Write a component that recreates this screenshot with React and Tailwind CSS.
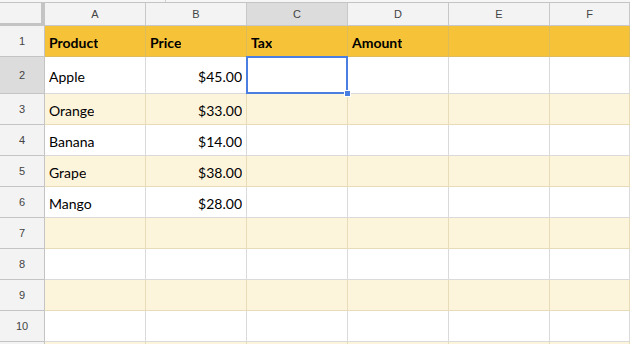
const cols = ["A", "B", "C", "D", "E", "F"];

const rows = [
  { n: 1, h: "h-[31px]", kind: "head", cells: ["Product", "Price", "Tax", "Amount", "", ""] },
  { n: 2, h: "h-[37px]", kind: "white", cells: ["Apple", "$45.00", "", "", "", ""], selected: true },
  { n: 3, h: "h-[31px]", kind: "band", cells: ["Orange", "$33.00", "", "", "", ""] },
  { n: 4, h: "h-[31px]", kind: "white", cells: ["Banana", "$14.00", "", "", "", ""] },
  { n: 5, h: "h-[31px]", kind: "band", cells: ["Grape", "$38.00", "", "", "", ""] },
  { n: 6, h: "h-[31px]", kind: "white", cells: ["Mango", "$28.00", "", "", "", ""] },
  { n: 7, h: "h-[31px]", kind: "band", cells: ["", "", "", "", "", ""] },
  { n: 8, h: "h-[31px]", kind: "white", cells: ["", "", "", "", "", ""] },
  { n: 9, h: "h-[31px]", kind: "band", cells: ["", "", "", "", "", ""] },
  { n: 10, h: "h-[31px]", kind: "white", cells: ["", "", "", "", "", ""] },
  { n: "", h: "h-[31px]", kind: "band", cells: ["", "", "", "", "", ""] },
];

const rowBg = {
  head: "bg-[#f6c338] border-[#dfbc5a]",
  white: "bg-white border-[#dadada]",
  band: "bg-[#fdf4dc] border-[#e8dcb8]",
};

function Cell({ text, i, kind, selected }) {
  const last = i === 5;
  const right = i === 1 && kind !== "head";
  return (
    <div
      className={`relative ${selected ? "z-10" : ""} ${last ? "flex-1" : "w-[101px]"} h-full shrink-0 border-r border-b ${rowBg[kind]} flex items-center pt-[2px] px-[4px] ${
        right ? "justify-end" : "justify-start"
      } ${kind === "head" ? "font-bold" : ""}`}
    >
      <span className="truncate">{text}</span>
      {selected && (
        <>
          <div className="absolute left-[-1px] top-[-1px] right-[-1px] bottom-[-1px] border-2 border-[#4a7ee0]" />
          <div className="absolute right-[-4px] bottom-[-4px] w-[7px] h-[7px] bg-[#4a7ee0] border border-white" />
        </>
      )}
    </div>
  );
}

export default function App() {
  return (
    <div className="w-[630px] h-[344px] overflow-hidden bg-white font-['Lato',sans-serif] text-[14px] text-black">
      <div className="h-[3px] flex border-b border-[#c4c4c4] bg-[#f6f6f6]">
        <div className="w-[166px] border-r border-[#d0d0d0]" />
        <div className="flex-1" />
      </div>
      <div className="flex h-[23px] font-['Liberation_Sans',Arial,sans-serif] text-[11px] text-[#444]">
        <div className="w-[45px] shrink-0 bg-[#f3f3f3] border-r-4 border-b-[3px] border-[#c4c4c4]" />
        {cols.map((c, i) => (
          <div
            key={c}
            className={`${i === 5 ? "flex-1" : "w-[101px]"} shrink-0 flex items-center justify-center border-r border-b border-[#c8c8c8] ${
              c === "C" ? "bg-[#dcdcdc]" : "bg-[#f3f3f3]"
            }`}
          >
            {c}
          </div>
        ))}
      </div>
      {rows.map((r, idx) => (
        <div key={idx} className={`flex ${r.h}`}>
          <div
            className={`w-[45px] shrink-0 h-full flex items-center justify-center border-r border-b border-[#c4c4c4] font-['Liberation_Sans',Arial,sans-serif] text-[11px] text-[#444] ${
              r.selected ? "bg-[#dcdcdc]" : "bg-[#f3f3f3]"
            }`}
          >
            {r.n}
          </div>
          {r.cells.map((t, i) => (
            <Cell key={i} text={t} i={i} kind={r.kind} selected={r.selected && i === 2} />
          ))}
        </div>
      ))}
    </div>
  );
}
